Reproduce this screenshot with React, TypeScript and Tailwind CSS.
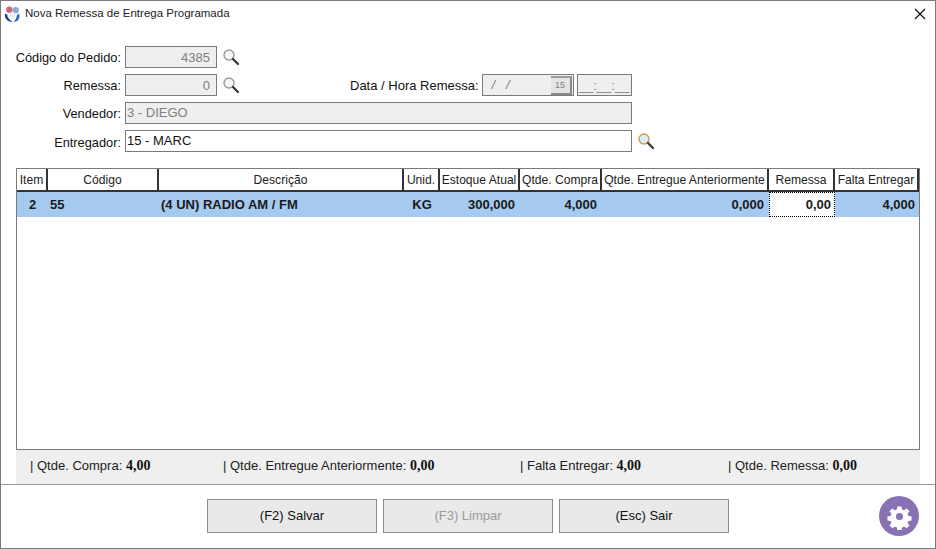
import React from "react";

const font = { fontFamily: '"Liberation Sans", Arial, sans-serif' };

function Lens({ color = false }: { color?: boolean }) {
  return (
    <svg width="18" height="18" viewBox="0 0 18 18" className="shrink-0">
      <circle cx="7" cy="7" r="5" fill={color ? "#d8f0f4" : "#f6f6f6"} stroke={color ? "#c9a04a" : "#9a9a9a"} strokeWidth="1.4" />
      <path d="M11 11 L16 16" stroke="#333" strokeWidth="2.2" strokeLinecap="round" />
    </svg>
  );
}

function Label({ children, extra = "mt-[2px]" }: { children: React.ReactNode; extra?: string }) {
  return <span className={`w-[121px] shrink-0 text-right text-[12.8px] text-[#111] pr-[4px] whitespace-nowrap ${extra}`}>{children}</span>;
}

function Field({ w, value, right, disabled }: { w: string; value: string; right?: boolean; disabled?: boolean }) {
  return (
    <div className={`${w} h-[22px] shrink-0 border border-[#7a7a7a] flex items-center text-[13px] leading-none ${disabled ? "bg-[#efefef] text-[#808080]" : "bg-white text-[#111]"} ${right ? "justify-end pr-[6px]" : "pl-[1px] pb-[2px]"}`}>
      {value}
    </div>
  );
}

const cols = [
  { t: "Item", w: "w-[31px]" },
  { t: "Código", w: "w-[111px]" },
  { t: "Descrição", w: "w-[245px]" },
  { t: "Unid.", w: "w-[36px]" },
  { t: "Estoque Atual", w: "w-[80px]" },
  { t: "Qtde. Compra", w: "w-[82px]" },
  { t: "Qtde. Entregue Anteriormente", w: "w-[167px]" },
  { t: "Remessa", w: "w-[66px]" },
  { t: "Falta Entregar", w: "w-[84px]" },
];

function Cell({ w, children, align = "text-right", extra = "" }: { w: string; children: React.ReactNode; align?: string; extra?: string }) {
  return <div className={`${w} shrink-0 ${align} ${extra} whitespace-nowrap leading-[25px]`}>{children}</div>;
}

function Stat({ w, label, value }: { w: string; label: string; value: string }) {
  return (
    <div className={`${w} shrink-0 whitespace-nowrap text-[13px] text-[#222]`}>
      | {label}: <span className="font-bold text-[14px] text-[#111]" style={{ fontFamily: '"Liberation Serif", serif' }}>{value}</span>
    </div>
  );
}

function Btn({ children, disabled }: { children: React.ReactNode; disabled?: boolean }) {
  return (
    <div className={`w-[170px] h-[34px] border border-[#8c8c8c] bg-[#e9e9e9] flex items-center justify-center text-[13px] ${disabled ? "text-[#999]" : "text-[#111]"}`}>
      {children}
    </div>
  );
}

export default function App() {
  return (
    <div className="w-[936px] h-[549px] bg-white overflow-hidden" style={font}>
      <div className="w-[936px] h-[549px] border border-[#7a7a7a] flex flex-col">
        <div className="h-[26px] flex items-center pl-[3px] pr-[9px] shrink-0">
          <svg width="17" height="17" viewBox="1 1 16 16" className="shrink-0">
            <circle cx="6" cy="4.5" r="3" fill="#c96a7c" />
            <circle cx="12" cy="5" r="3" fill="#8fa8dc" />
            <circle cx="9" cy="9" r="2.6" fill="#e6ecf7" />
            <path d="M2 8 C1 12 4 16 9 16 C6 14 4 12 4 9 Z" fill="#123f8f" />
            <path d="M15 8 C17 12 14 16 10 16 C12 14 13 12 13 10 Z" fill="#2f69c6" />
          </svg>
          <span className="ml-[4px] text-[11.5px] text-[#222] flex-1 leading-[16px] mb-[3px]">Nova Remessa de Entrega Programada</span>
          <svg width="12" height="12" viewBox="0 0 12 12" className="mt-[-1px] ml-[1px]"><path d="M1 1 L11 11 M11 1 L1 11" stroke="#111" strokeWidth="1.2" /></svg>
        </div>

        <div className="flex flex-col pl-[3px] pt-[19px] gap-[6px] shrink-0">
          <div className="flex items-center h-[22px]">
            <Label>Código do Pedido:</Label>
            <Field w="w-[92px]" value="4385" right disabled />
            <span className="ml-[5px]"><Lens /></span>
          </div>
          <div className="flex items-center h-[22px]">
            <Label>Remessa:</Label>
            <Field w="w-[92px]" value="0" right disabled />
            <span className="ml-[5px]"><Lens /></span>
            <span className="ml-[110px] mt-[2px] text-[13px] text-[#111] whitespace-nowrap">Data / Hora Remessa:</span>
            <div className="ml-[3px] w-[92px] h-[22px] border border-[#7a7a7a] bg-[#efefef] flex items-center justify-between text-[13px] text-[#808080] pl-[9px] pr-[1px]">
              <span className="italic">/ &nbsp; /</span>
              <div className="w-[21px] h-[19px] bg-[#e4e4e4] border-r-2 border-b-2 border-[#8a8a8a] border-t-2 border-t-[#9a9a9a] text-[9px] flex items-center justify-center leading-none">15</div>
            </div>
            <div className="ml-[3px] w-[55px] h-[22px] border border-[#7a7a7a] bg-[#efefef] text-[13px] text-[#808080] flex items-center justify-center leading-none">__:__:__</div>
          </div>
          <div className="flex items-center h-[22px]">
            <Label>Vendedor:</Label>
            <Field w="w-[507px]" value="3 - DIEGO" disabled />
          </div>
          <div className="flex items-center h-[22px]">
            <Label extra="mt-[4px]">Entregador:</Label>
            <Field w="w-[507px]" value="15 - MARC" />
            <span className="ml-[5px]"><Lens color /></span>
          </div>
        </div>

        <div className="ml-[15px] mt-[16px] w-[904px] h-[282px] border border-[#7a7a7a] shrink-0 overflow-hidden bg-white">
          <div className="flex h-[23px] w-[902px] text-[12.1px] text-[#222]">
            {cols.map((c) => (
              <div key={c.t} className={`${c.w} shrink-0 text-center leading-[23px] whitespace-nowrap border-r-2 border-b-2 border-r-[#333] border-b-[#333]`}>{c.t}</div>
            ))}
          </div>
          <div className="flex h-[25px] bg-[#a6c9ef] text-[13px] font-bold text-[#1a1a1a]">
            <Cell w="w-[31px]" align="text-center">2</Cell>
            <Cell w="w-[111px]" align="text-left" extra="pl-[2px]">55</Cell>
            <Cell w="w-[245px]" align="text-left" extra="pl-[2px]">(4 UN) RADIO AM / FM</Cell>
            <Cell w="w-[36px]" align="text-center">KG</Cell>
            <Cell w="w-[80px]" extra="pr-[5px]">300,000</Cell>
            <Cell w="w-[82px]" extra="pr-[5px]">4,000</Cell>
            <Cell w="w-[167px]" extra="pr-[5px]">0,000</Cell>
            <div className="w-[66px] shrink-0 bg-white border border-dotted border-black text-right pr-[3px] leading-[23px]">0,00</div>
            <Cell w="w-[85px]" extra="pr-[5px]">4,000</Cell>
          </div>
        </div>

        <div className="ml-[15px] w-[904px] h-[34px] bg-[#efefef] flex items-center pl-[14px] pb-[4px] shrink-0">
          <Stat w="w-[193px]" label="Qtde. Compra" value="4,00" />
          <Stat w="w-[297px]" label="Qtde. Entregue Anteriormente" value="0,00" />
          <Stat w="w-[208px]" label="Falta Entregar" value="4,00" />
          <Stat w="w-[190px]" label="Qtde. Remessa" value="0,00" />
        </div>

        <div className="flex-1 border-t border-[#9a9a9a] flex items-center relative pl-[206px] gap-[6px] pb-[1px]">
          <Btn>(F2) Salvar</Btn>
          <Btn disabled>(F3) Limpar</Btn>
          <Btn>(Esc) Sair</Btn>
          <div className="absolute left-[878px] top-[11px] w-[40px] h-[40px] rounded-full bg-[#8872b4] flex items-center justify-center">
            <svg width="27" height="27" viewBox="0 0 24 24">
              <path fill="#fff" fillRule="evenodd" d="M10 2h4l.5 3 2 .9 2.5-1.8 2.8 2.8-1.8 2.5.9 2 3 .5v4l-3 .5-.9 2 1.8 2.5-2.8 2.8-2.5-1.8-2 .9-.5 3h-4l-.5-3-2-.9-2.5 1.8-2.8-2.8 1.8-2.5-.9-2-3-.5v-4l3-.5.9-2L2.1 6.9l2.8-2.8 2.5 1.8 2-.9zM12 8.5a3.5 3.5 0 1 0 0 7 3.5 3.5 0 0 0 0-7z" transform="translate(1.2 1.2) scale(0.9)" />
            </svg>
          </div>
        </div>
      </div>
    </div>
  );
}
